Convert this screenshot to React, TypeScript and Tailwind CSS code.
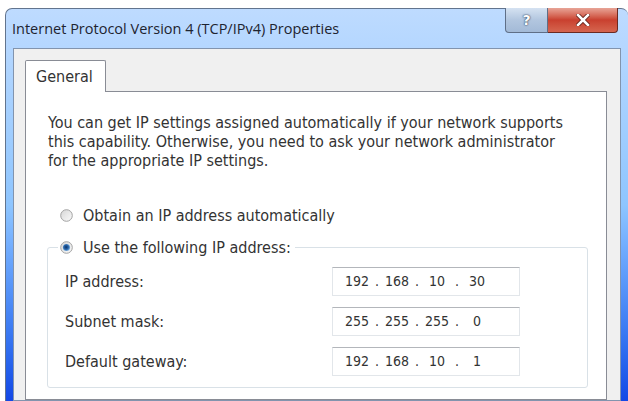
import React from "react";

const TITLE_FONT = "font-['Open_Sans','Noto_Sans',sans-serif]";
const DLG_FONT = "font-['DejaVu_Sans_Condensed','DejaVu_Sans',sans-serif]";

const ROWS = [
  { label: "IP address:", ip: ["192", "168", "10", "30"] },
  { label: "Subnet mask:", ip: ["255", "255", "255", "0"] },
  { label: "Default gateway:", ip: ["192", "168", "10", "1"] },
];

function Radio({ checked, id }: { checked?: boolean; id: string }) {
  return (
    <svg width="13" height="13" viewBox="0 0 13 13" className="shrink-0">
      <defs>
        <linearGradient id={`${id}-f`} x1="0" y1="0" x2="1" y2="1">
          <stop offset="0" stopColor="#d6d6d6" />
          <stop offset="1" stopColor="#fbfbfb" />
        </linearGradient>
        <radialGradient id={`${id}-d`} cx="0.45" cy="0.45" r="0.6">
          <stop offset="0" stopColor="#0d3266" />
          <stop offset="0.55" stopColor="#2a68ad" />
          <stop offset="1" stopColor="#9cc6ea" />
        </radialGradient>
      </defs>
      <circle cx="6.5" cy="6.5" r="5.8" fill={`url(#${id}-f)`} stroke="#a2a2a2" strokeWidth="1" />
      {checked && <circle cx="6.5" cy="6.5" r="3.6" fill={`url(#${id}-d)`} />}
    </svg>
  );
}

function IpBox({ ip }: { ip: string[] }) {
  return (
    <div className="flex h-[29px] w-[188px] items-center border border-[#e2e6ea] border-t-[#b3b6bb] bg-white pl-[10px] text-[14px] text-[#333]">
      {ip.map((o, i) => (
        <React.Fragment key={i}>
          <span className="w-[28px] text-center">{o}</span>
          {i < 3 && <span className="w-[12px] text-center">.</span>}
        </React.Fragment>
      ))}
    </div>
  );
}

export default function App() {
  return (
    <div className="relative h-[401px] w-[628px] overflow-hidden bg-white">
      <div className="ml-[5px] mt-[8px] flex h-[393px] w-[623px] flex-col rounded-t-[7px] border-l border-t border-slate-500 bg-linear-to-b from-blue-200 via-blue-300 to-blue-700 px-[7px]">
        {/* title bar */}
        <div className="flex h-[39px] shrink-0 items-start">
          <span className={`-ml-px self-center text-[14.5px] text-[#1e2430] ${TITLE_FONT}`}>
            Internet Protocol Version 4 (TCP/IPv4) Properties
          </span>
          <div className="ml-auto mr-[3px] -mt-px flex">
            <div className="flex h-[25px] w-[43px] items-center justify-center rounded-bl-[4px] border border-t-0 border-[#5f6f87] bg-linear-to-b from-[#d5e2f1] via-[#b2c6df] to-[#a3bad7]">
              <span className="font-['DejaVu_Sans',sans-serif] text-[14px] font-bold text-white [text-shadow:0_0_2px_#2c3e57,0_0_1px_#2c3e57]">?</span>
            </div>
            <div className="flex h-[25px] w-[70px] items-center justify-center rounded-br-[4px] border border-l-0 border-t-0 border-[#6b2a22] bg-linear-to-b from-[#e7a497] via-[#c9402f] to-[#d5654f]">
              <svg width="14" height="12" viewBox="0 0 14 12">
                <path d="M2 1 L12 11 M12 1 L2 11" stroke="#5a1a12" strokeWidth="4.2" strokeLinecap="square" />
                <path d="M2 1 L12 11 M12 1 L2 11" stroke="#ffffff" strokeWidth="2.6" strokeLinecap="square" />
              </svg>
            </div>
          </div>
        </div>

        {/* client area */}
        <div className={`flex w-[608px] flex-1 flex-col border border-[#8294ae] bg-[#f0f0f0] pl-[11px] pt-[11px] ${DLG_FONT}`}>
          <div className="flex">
            <div className="relative z-10 -mb-px flex h-[32px] w-[81px] items-center rounded-t-[2px] border border-b-0 border-[#898c95] bg-white pl-[10px] text-[16px] text-[#333]">
              General
            </div>
          </div>
          <div className="flex w-[582px] flex-1 flex-col border border-[#898c95] bg-white pl-[22px] pt-[21px] text-[16px] leading-[19px] text-[#333]">
            <p className="whitespace-nowrap">
              You can get IP settings assigned automatically if your network supports
              <br />
              this capability. Otherwise, you need to ask your network administrator
              <br />
              for the appropriate IP settings.
            </p>

            <div className="mt-[36px] flex h-[19px] items-center gap-[10px] pl-[12px]">
              <Radio id="r1" />
              <span>Obtain an IP address automatically</span>
            </div>

            <fieldset className="-ml-px mt-[13px] w-[541px] rounded-[3px] border border-[#d9e1e7] pb-[11px]">
              <legend className="ml-[10px] pl-[2px] pr-[4px]">
                <div className="flex h-[19px] items-center gap-[10px]">
                  <Radio id="r2" checked />
                  <span>Use the following IP address:</span>
                </div>
              </legend>
              <div className="flex flex-col gap-[11px] pl-[17px] pt-[10px]">
                {ROWS.map((r) => (
                  <div key={r.label} className="flex h-[29px] items-center">
                    <span className="w-[267px]">{r.label}</span>
                    <IpBox ip={r.ip} />
                  </div>
                ))}
              </div>
            </fieldset>
          </div>
        </div>
      </div>
    </div>
  );
}
